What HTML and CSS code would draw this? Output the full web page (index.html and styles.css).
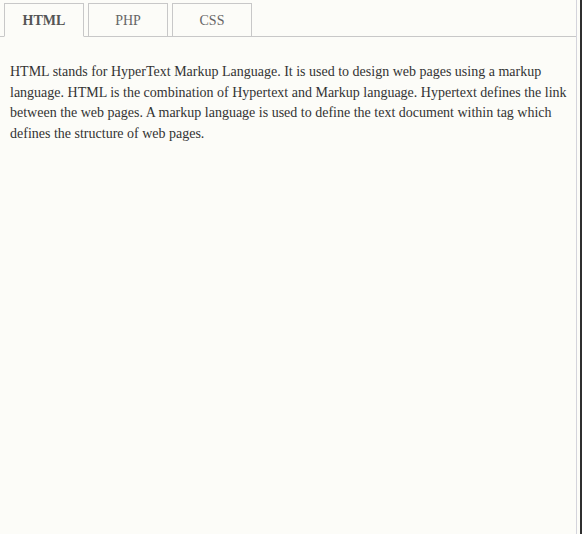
FILE: index.html
```html
<!DOCTYPE html>
<html>
<head>
<meta charset="utf-8">
<link rel="stylesheet" href="styles.css">
</head>
<body>
<div class="page">
  <ul class="tabs">
    <li class="tab active">HTML</li>
    <li class="tab">PHP</li>
    <li class="tab">CSS</li>
  </ul>
  <div class="content">
    <p>HTML stands for HyperText Markup Language. It is used to design web pages using a markup language. HTML is the combination of Hypertext and Markup language. Hypertext defines the link between the web pages. A markup language is used to define the text document within tag which defines the structure of web pages.</p>
  </div>
</div>
<div class="edge"></div>
</body>
</html>
```

FILE: styles.css
```css
html, body {
  margin: 0;
  height: 100%;
}
body {
  display: flex;
  background: #fcfcf8;
  font-family: "Liberation Serif", "Times New Roman", serif;
  color: #333;
}
.page {
  width: 576px;
  border-right: 1px solid #d4d4dc;
}
.edge {
  margin-left: auto;
  width: 2px;
  background: #2f2f2f;
}
.tabs {
  list-style: none;
  margin: 0;
  padding: 3px 0 0 4px;
  display: flex;
  gap: 4px;
  border-bottom: 1px solid #c8c8c8;
}
.tab {
  box-sizing: border-box;
  width: 80px;
  height: 34px;
  margin-bottom: -1px;
  border: 1px solid #c8c8c8;
  display: flex;
  align-items: center;
  justify-content: center;
  padding-top: 1px;
  font-size: 14px;
  color: #666;
}
.tab.active {
  border-bottom-color: #fcfcf8;
  font-weight: bold;
  color: #555;
}
.content {
  padding: 25px 0 0 10px;
}
.content p {
  margin: 0;
  font-size: 14px;
  line-height: 20.7px;
}
```
